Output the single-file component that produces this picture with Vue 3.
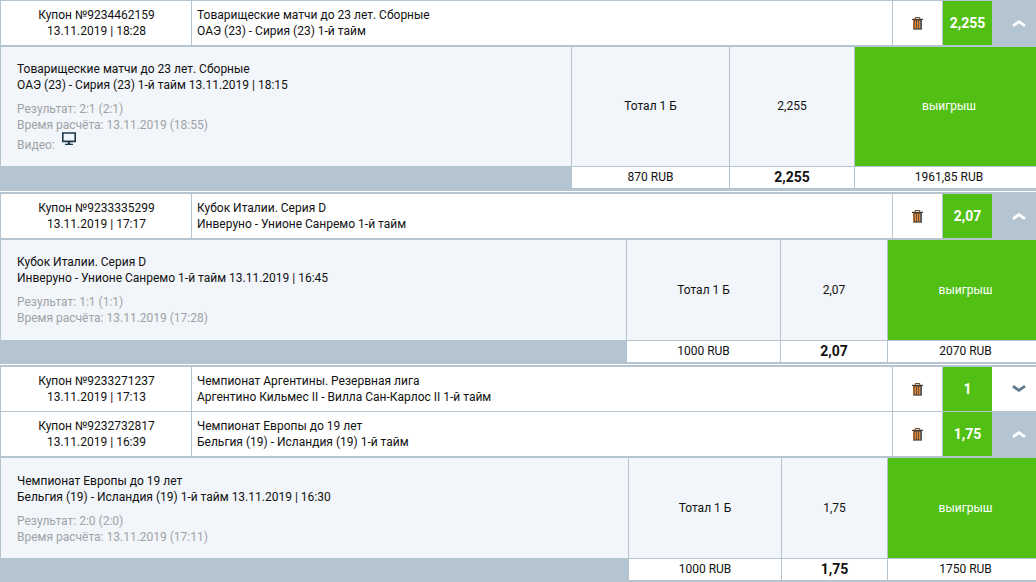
<script setup>
const groups = [
  { first: true, rows: [{ id: '9234462159', date: '13.11.2019 | 18:28', league: 'Товарищеские матчи до 23 лет. Сборные', match: 'ОАЭ (23) - Сирия (23) 1-й тайм', odds: '2,255', open: true,
    detail: { cols: '570px 158px 125px 1fr', start: '13.11.2019 | 18:15', score: '2:1 (2:1)', calc: '13.11.2019 (18:55)', video: true, stake: '870 RUB', win: '1961,85 RUB', h: 119 } }] },
  { rows: [{ id: '9233335299', date: '13.11.2019 | 17:17', league: 'Кубок Италии. Серия D', match: 'Инверуно - Унионе Санремо 1-й тайм', odds: '2,07', open: true,
    detail: { cols: '625px 154px 107px 1fr', start: '13.11.2019 | 16:45', score: '1:1 (1:1)', calc: '13.11.2019 (17:28)', stake: '1000 RUB', win: '2070 RUB', h: 100 } }] },
  { rows: [
    { id: '9233271237', date: '13.11.2019 | 17:13', league: 'Чемпионат Аргентины. Резервная лига', match: 'Аргентино Кильмес II - Вилла Сан-Карлос II 1-й тайм', odds: '1', open: false },
    { id: '9232732817', date: '13.11.2019 | 16:39', league: 'Чемпионат Европы до 19 лет', match: 'Бельгия (19) - Исландия (19) 1-й тайм', odds: '1,75', open: true,
      detail: { cols: '627px 153px 106px 1fr', start: '13.11.2019 | 16:30', score: '2:0 (2:0)', calc: '13.11.2019 (17:11)', stake: '1000 RUB', win: '1750 RUB', h: 100, low: true } }
  ] }
]
</script>

<template>
  <div class="page">
    <section v-for="(g, gi) in groups" :key="gi" class="group" :class="{ first: g.first }">
      <template v-for="r in g.rows" :key="r.id">
        <div class="head" :class="{ opened: r.open }">
          <div class="coupon">
            <div>Купон №{{ r.id }}</div>
            <div>{{ r.date }}</div>
          </div>
          <div class="event">
            <div>{{ r.league }}</div>
            <div>{{ r.match }}</div>
          </div>
          <div class="del">
            <svg width="11" height="13" viewBox="0 0 11 13">
              <path d="M3.2 2V.5h4.6V2" fill="none" stroke="#6b4a2e" stroke-width="1" />
              <rect x="0" y="1.8" width="11" height="1.2" fill="#4a3a2e" />
              <rect x="1" y="3" width="9" height="9.6" fill="#3a3a3c" />
              <path d="M1.5 3v9" stroke="#b5682a" stroke-width="1" />
              <path d="M3.3 3.6v7.9M5.5 3.6v7.9M7.7 3.6v7.9" stroke="#e0893a" stroke-width="1.5" />
              <path d="M9.5 3v9" stroke="#3f5f80" stroke-width="1" />
            </svg>
          </div>
          <div class="odds">{{ r.odds }}</div>
          <div class="toggle">
            <svg width="14" height="8" viewBox="0 0 14 8">
              <path v-if="r.open" d="M1 6.8 7 2.6l6 4.2" fill="none" stroke="#fff" stroke-width="2.8" />
              <path v-else d="M1 1.2 7 5.4l6-4.2" fill="none" stroke="#5d7d8e" stroke-width="2.8" />
            </svg>
          </div>
        </div>
        <div v-if="r.detail" class="detail" :style="{ gridTemplateColumns: r.detail.cols, gridTemplateRows: r.detail.h + 'px 22px' }">
          <div class="info" :class="{ low: r.detail.low }">
            <div class="dark">
              <div>{{ r.league }}</div>
              <div>{{ r.match }} {{ r.detail.start }}</div>
            </div>
            <div class="muted">
              <div>Результат: {{ r.detail.score }}</div>
              <div>Время расчёта: {{ r.detail.calc }}</div>
              <div v-if="r.detail.video" class="video">
                Видео:
                <svg width="14" height="14" viewBox="0 0 14 14">
                  <path d="M.8 1h12.4v8.4H.8z" fill="none" stroke="#1f3a48" stroke-width="1.6" />
                  <path d="M5.8 9.5h2.4v2.5H5.8zM3 11.8h8V13H3z" fill="#1f3a48" />
                </svg>
              </div>
            </div>
          </div>
          <div class="cell">Тотал 1 Б</div>
          <div class="cell">{{ r.odds }}</div>
          <div class="result">выигрыш</div>
          <div class="band"></div>
          <div class="foot">{{ r.detail.stake }}</div>
          <div class="foot strong">{{ r.odds }}</div>
          <div class="foot wide">{{ r.detail.win }}</div>
        </div>
      </template>
    </section>
  </div>
</template>

<style scoped>
.page {
  width: 1036px;
  height: 582px;
  overflow: hidden;
  background: #fff;
  font: 12px/16px Roboto, sans-serif;
  color: #111;
}
.group {
  border-top: 2px solid #b5c4d1;
  border-bottom: 2px solid #b5c4d1;
  border-left: 1px solid #b5c4d1;
  margin-bottom: 1px;
}
.first {
  border-top-width: 1px;
  border-bottom-width: 3px;
}
.head {
  display: grid;
  grid-template-columns: 190px 1fr 51px 49px 44px;
  height: 44px;
  border-bottom: 1px solid #b5c4d1;
}
.head.opened {
  border-bottom: 2px solid #b5c4d1;
}
.coupon {
  display: flex;
  flex-direction: column;
  justify-content: center;
  text-align: center;
  padding-left: 1px;
}
.event {
  display: flex;
  flex-direction: column;
  justify-content: center;
  padding-left: 5px;
  border-left: 1px solid #b5c4d1;
}
.del {
  display: flex;
  align-items: center;
  justify-content: center;
  border-left: 1px solid #b5c4d1;
  border-right: 1px solid #b5c4d1;
}
.odds {
  display: flex;
  align-items: center;
  justify-content: center;
  background: #52bf14;
  color: #fff;
  font-size: 14px;
  font-weight: 700;
}
.toggle {
  display: flex;
  align-items: center;
  justify-content: center;
  padding-left: 9px;
}
.opened .toggle {
  background: #b5c4d1;
}
.detail {
  display: grid;
}
.info {
  padding: 14px 0 0 16px;
  background: #f2f5f9;
}
.info.low {
  padding-top: 15px;
}
.dark {
  color: #111;
}
.muted {
  margin-top: 8px;
  color: #9ea3a8;
}
.video {
  display: flex;
  align-items: center;
  gap: 7px;
  margin-top: 4px;
}
.video svg {
  position: relative;
  top: -6px;
}
.cell {
  display: flex;
  align-items: center;
  justify-content: center;
  background: #f2f5f9;
  border-left: 1px solid #b5c4d1;
  padding-bottom: 1px;
}
.result {
  display: flex;
  align-items: center;
  justify-content: center;
  background: #52bf14;
  color: #fff;
  padding: 0 0 1px 7px;
  border-left: 1px solid #b5c4d1;
}
.band {
  background: #b5c4d1;
}
.foot {
  display: flex;
  align-items: center;
  justify-content: center;
  border-top: 1px solid #b5c4d1;
  border-left: 1px solid #b5c4d1;
  padding-bottom: 1px;
}
.foot.wide {
  padding-left: 7px;
}
.strong {
  font-size: 14px;
  font-weight: 700;
}
</style>
